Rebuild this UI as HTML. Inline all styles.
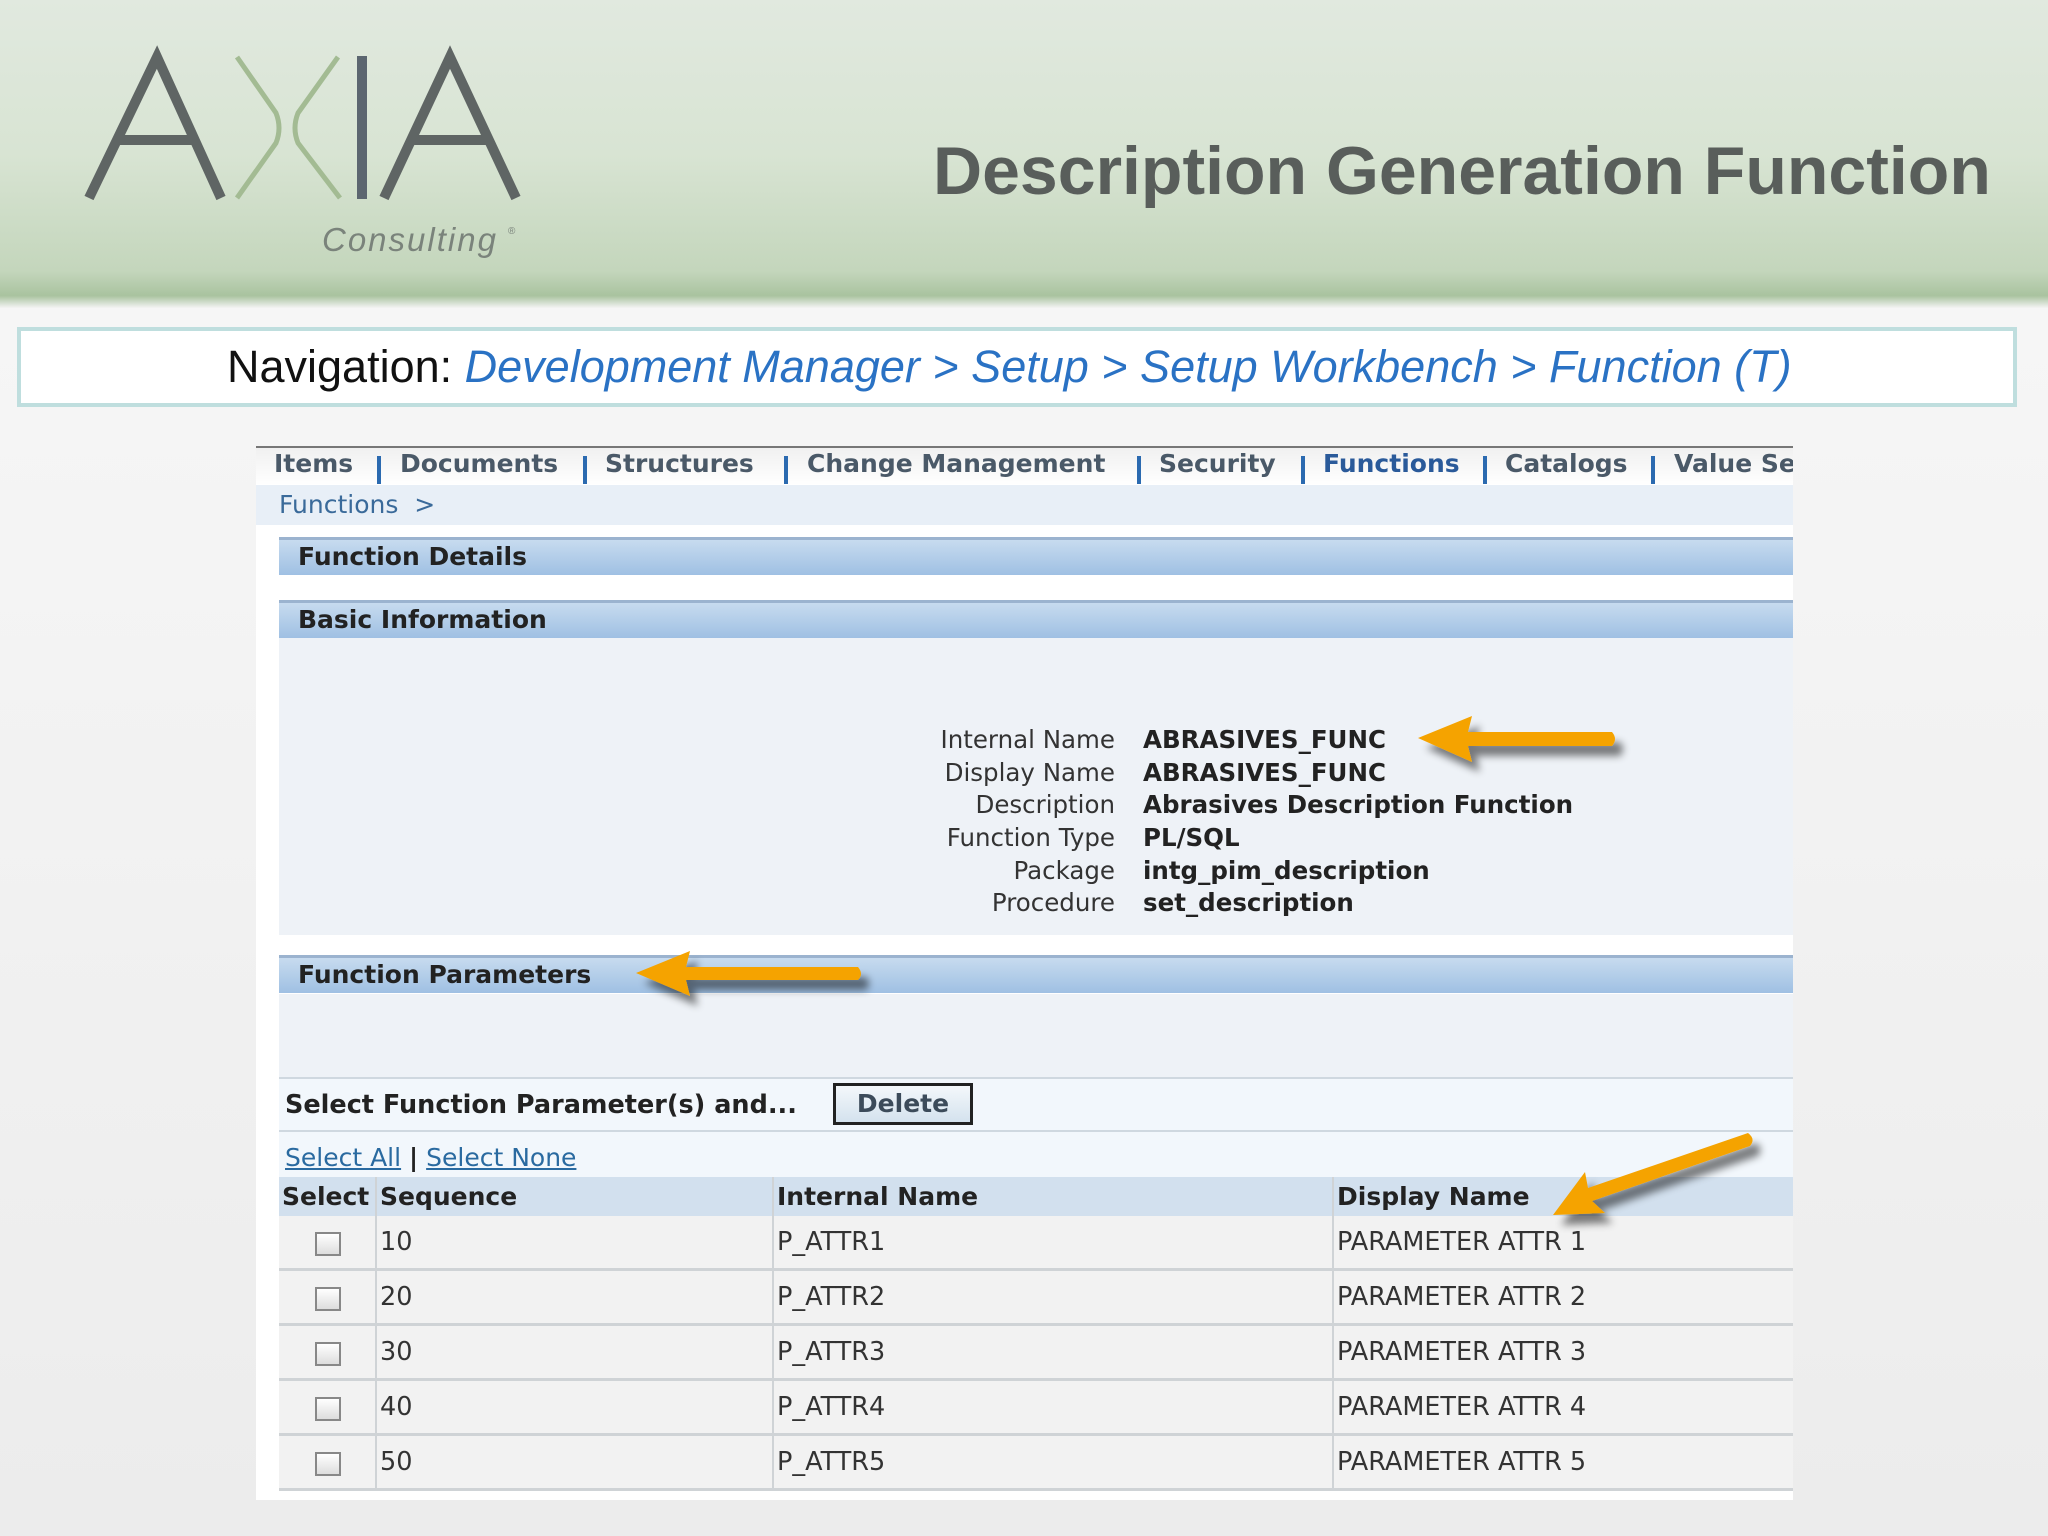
<!DOCTYPE html>
<html><head><meta charset="utf-8"><style>
*{margin:0;padding:0;box-sizing:border-box}
body{width:2048px;height:1536px;position:relative;overflow:hidden;font-family:"Liberation Sans",sans-serif;background:linear-gradient(180deg,#f6f6f6 300px,#ececec 1536px)}
.abs{position:absolute}
.hdr{left:0;top:0;width:2048px;height:308px;background:linear-gradient(180deg,#e1e9df 0%,#d8e4d3 50%,#c4d6bc 88%,#a9c39f 96%,#f4f4f4 100%)}
.title{left:933px;top:132px;font-size:68px;font-weight:bold;color:#595e5b;white-space:nowrap}
.nav{left:17px;top:327px;width:2000px;height:80px;border:4px solid #bfdede;background:#fff;font-size:45px;color:#111;padding-left:206px;line-height:72px;white-space:nowrap}
.nav i{color:#2a72c4}
.panel{left:256px;top:446px;width:1537px;height:1054px;background:#fff}
.s{font-family:"DejaVu Sans",sans-serif;color:#222;white-space:nowrap}
.tabs{left:256px;top:446px;width:1537px;height:39px;background:linear-gradient(#f0f0f0,#fff);border-top:2px solid #777;overflow:hidden}
.tab{position:absolute;top:-1px;font-size:25px;font-weight:bold;color:#4a5968;line-height:34px}
.sep{position:absolute;top:8px;width:4px;height:28px;background:#2b6ab0}
.bc{left:256px;top:485px;width:1537px;height:40px;background:#e8eff7;font-size:25px;color:#3a6a9a;padding-left:23px;line-height:40px}
.sh{left:279px;width:1514px;height:38px;background:linear-gradient(#c7dbef,#9fc0e3);border-top:3px solid #9bb3cf;font-size:25px;font-weight:bold;color:#222;padding-left:19px;line-height:34px}
.lbl{width:1115px;left:0;text-align:right;font-size:24.5px;color:#333}
.val{left:1143px;font-size:24.5px;font-weight:bold;color:#222}
.row{left:279px;width:1514px;height:55px;background:#f2f2f2;border-bottom:3px solid #cfd3d6;font-size:25.5px;color:#333}
.row div,.th div{position:absolute;top:0;height:100%;border-left:2px solid #cfd3d6;padding-left:3px;line-height:52px}
.th{left:279px;top:1177px;width:1514px;height:39px;background:#d2e0ee;font-size:25px;font-weight:bold;color:#222}
.th div{line-height:39px}
.cb{position:absolute;left:36px;top:16px;width:26px;height:24px;border:2px solid #888;background:linear-gradient(#fff,#ddd)}
</style></head><body>
<div class="abs hdr"></div>
<svg class="abs" style="left:0;top:0" width="700" height="320">
<path d="M237 57 L276 113 Q282 128 276 143 L237 198 M338 57 L298 113 Q292 128 298 143 L340 198" stroke="#a3bb93" stroke-width="5" fill="none"/>
<g stroke="#5f6564" stroke-width="10" fill="none">
<path d="M89 198 L157 57 L221 198 M117 140 L196 140"/>
<path d="M362 56 L362 199" stroke="#5c6670"/>
<path d="M384 198 L450 57 L516 198 M413 140 L488 140"/>
</g>
<text x="322" y="251" font-family="Liberation Sans,sans-serif" font-size="33" letter-spacing="2" fill="#7a837b" font-style="italic">Consulting</text>
<text x="508" y="234" font-size="10" fill="#7a837b">®</text>
</svg>
<div class="abs title">Description Generation Function</div>
<div class="abs nav">Navigation: <i>Development Manager &gt; Setup &gt; Setup Workbench &gt; Function (T)</i></div>

<div class="abs panel"></div>
<div class="abs tabs s">
<span class="tab" style="left:18px">Items</span><span class="sep" style="left:121px"></span>
<span class="tab" style="left:144px">Documents</span><span class="sep" style="left:327px"></span>
<span class="tab" style="left:349px">Structures</span><span class="sep" style="left:528px"></span>
<span class="tab" style="left:551px">Change Management</span><span class="sep" style="left:881px"></span>
<span class="tab" style="left:903px">Security</span><span class="sep" style="left:1045px"></span>
<span class="tab" style="left:1067px;color:#2a5a9a">Functions</span><span class="sep" style="left:1227px"></span>
<span class="tab" style="left:1249px">Catalogs</span><span class="sep" style="left:1395px"></span>
<span class="tab" style="left:1418px">Value Sets</span>
</div>
<div class="abs bc s">Functions &nbsp;&gt;</div>
<div class="abs sh s" style="top:537px">Function Details</div>
<div class="abs sh s" style="top:600px">Basic Information</div>
<div class="abs" style="left:279px;top:638px;width:1514px;height:297px;background:#eef2f7"></div>
<div class="abs lbl s" style="top:725px">Internal Name</div><div class="abs val s" style="top:725px">ABRASIVES_FUNC</div>
<div class="abs lbl s" style="top:758px">Display Name</div><div class="abs val s" style="top:758px">ABRASIVES_FUNC</div>
<div class="abs lbl s" style="top:790px">Description</div><div class="abs val s" style="top:790px">Abrasives Description Function</div>
<div class="abs lbl s" style="top:823px">Function Type</div><div class="abs val s" style="top:823px">PL/SQL</div>
<div class="abs lbl s" style="top:856px">Package</div><div class="abs val s" style="top:856px">intg_pim_description</div>
<div class="abs lbl s" style="top:888px">Procedure</div><div class="abs val s" style="top:888px">set_description</div>
<div class="abs sh s" style="top:955px">Function Parameters</div>
<div class="abs" style="left:279px;top:994px;width:1514px;height:83px;background:#eef2f7"></div>
<div class="abs s" style="left:279px;top:1077px;width:1514px;height:55px;background:#f2f7fc;border-top:2px solid #cfd8e0;border-bottom:2px solid #cfd8e0;font-size:25.5px;font-weight:bold;padding-left:6px;line-height:52px">Select Function Parameter(s) and...</div>
<div class="abs s" style="left:833px;top:1083px;width:140px;height:42px;border:3px solid #222;background:linear-gradient(#f4f8fb,#d4e2ee);font-size:25px;font-weight:bold;color:#3c4b5a;text-align:center;line-height:36px">Delete</div>
<div class="abs s" style="left:279px;top:1132px;width:1514px;height:45px;background:#f2f7fc;font-size:25px;line-height:52px;padding-left:6px;color:#2a6aa0"><u>Select All</u> <span style="color:#222;font-weight:bold">|</span> <u>Select None</u></div>
<div class="abs th s"><div style="left:0;border:0">Select</div><div style="left:96px">Sequence</div><div style="left:493px">Internal Name</div><div style="left:1053px">Display Name</div></div>
<div class="abs row s" style="top:1216px"><span class="cb"></span><div style="left:96px">10</div><div style="left:493px">P_ATTR1</div><div style="left:1053px">PARAMETER ATTR 1</div></div>
<div class="abs row s" style="top:1271px"><span class="cb"></span><div style="left:96px">20</div><div style="left:493px">P_ATTR2</div><div style="left:1053px">PARAMETER ATTR 2</div></div>
<div class="abs row s" style="top:1326px"><span class="cb"></span><div style="left:96px">30</div><div style="left:493px">P_ATTR3</div><div style="left:1053px">PARAMETER ATTR 3</div></div>
<div class="abs row s" style="top:1381px"><span class="cb"></span><div style="left:96px">40</div><div style="left:493px">P_ATTR4</div><div style="left:1053px">PARAMETER ATTR 4</div></div>
<div class="abs row s" style="top:1436px"><span class="cb"></span><div style="left:96px">50</div><div style="left:493px">P_ATTR5</div><div style="left:1053px">PARAMETER ATTR 5</div></div>

<svg class="abs" style="left:0;top:0" width="2048" height="1536">
<defs><filter id="sh" x="-20%" y="-50%" width="140%" height="200%"><feGaussianBlur in="SourceAlpha" stdDeviation="4"/><feOffset dx="8" dy="10"/><feComponentTransfer><feFuncA type="linear" slope="0.5"/></feComponentTransfer><feMerge><feMergeNode/><feMergeNode in="SourceGraphic"/></feMerge></filter></defs>
<g fill="#f5a300" stroke="none" filter="url(#sh)">
<path d="M1418 738 L1472 716 L1468 732 L1612 732 Q1618 739 1612 746 L1468 746 L1472 762 Z"/>
<path d="M636 973 L690 951 L686 967 L858 967 Q864 974 858 980 L686 980 L690 996 Z"/>
<path d="M1553 1215 L1585 1172 L1588 1188 L1748 1133 Q1756 1139 1750 1146 L1592 1201 L1605 1213 Z"/>
</g>
</svg>
</body></html>
